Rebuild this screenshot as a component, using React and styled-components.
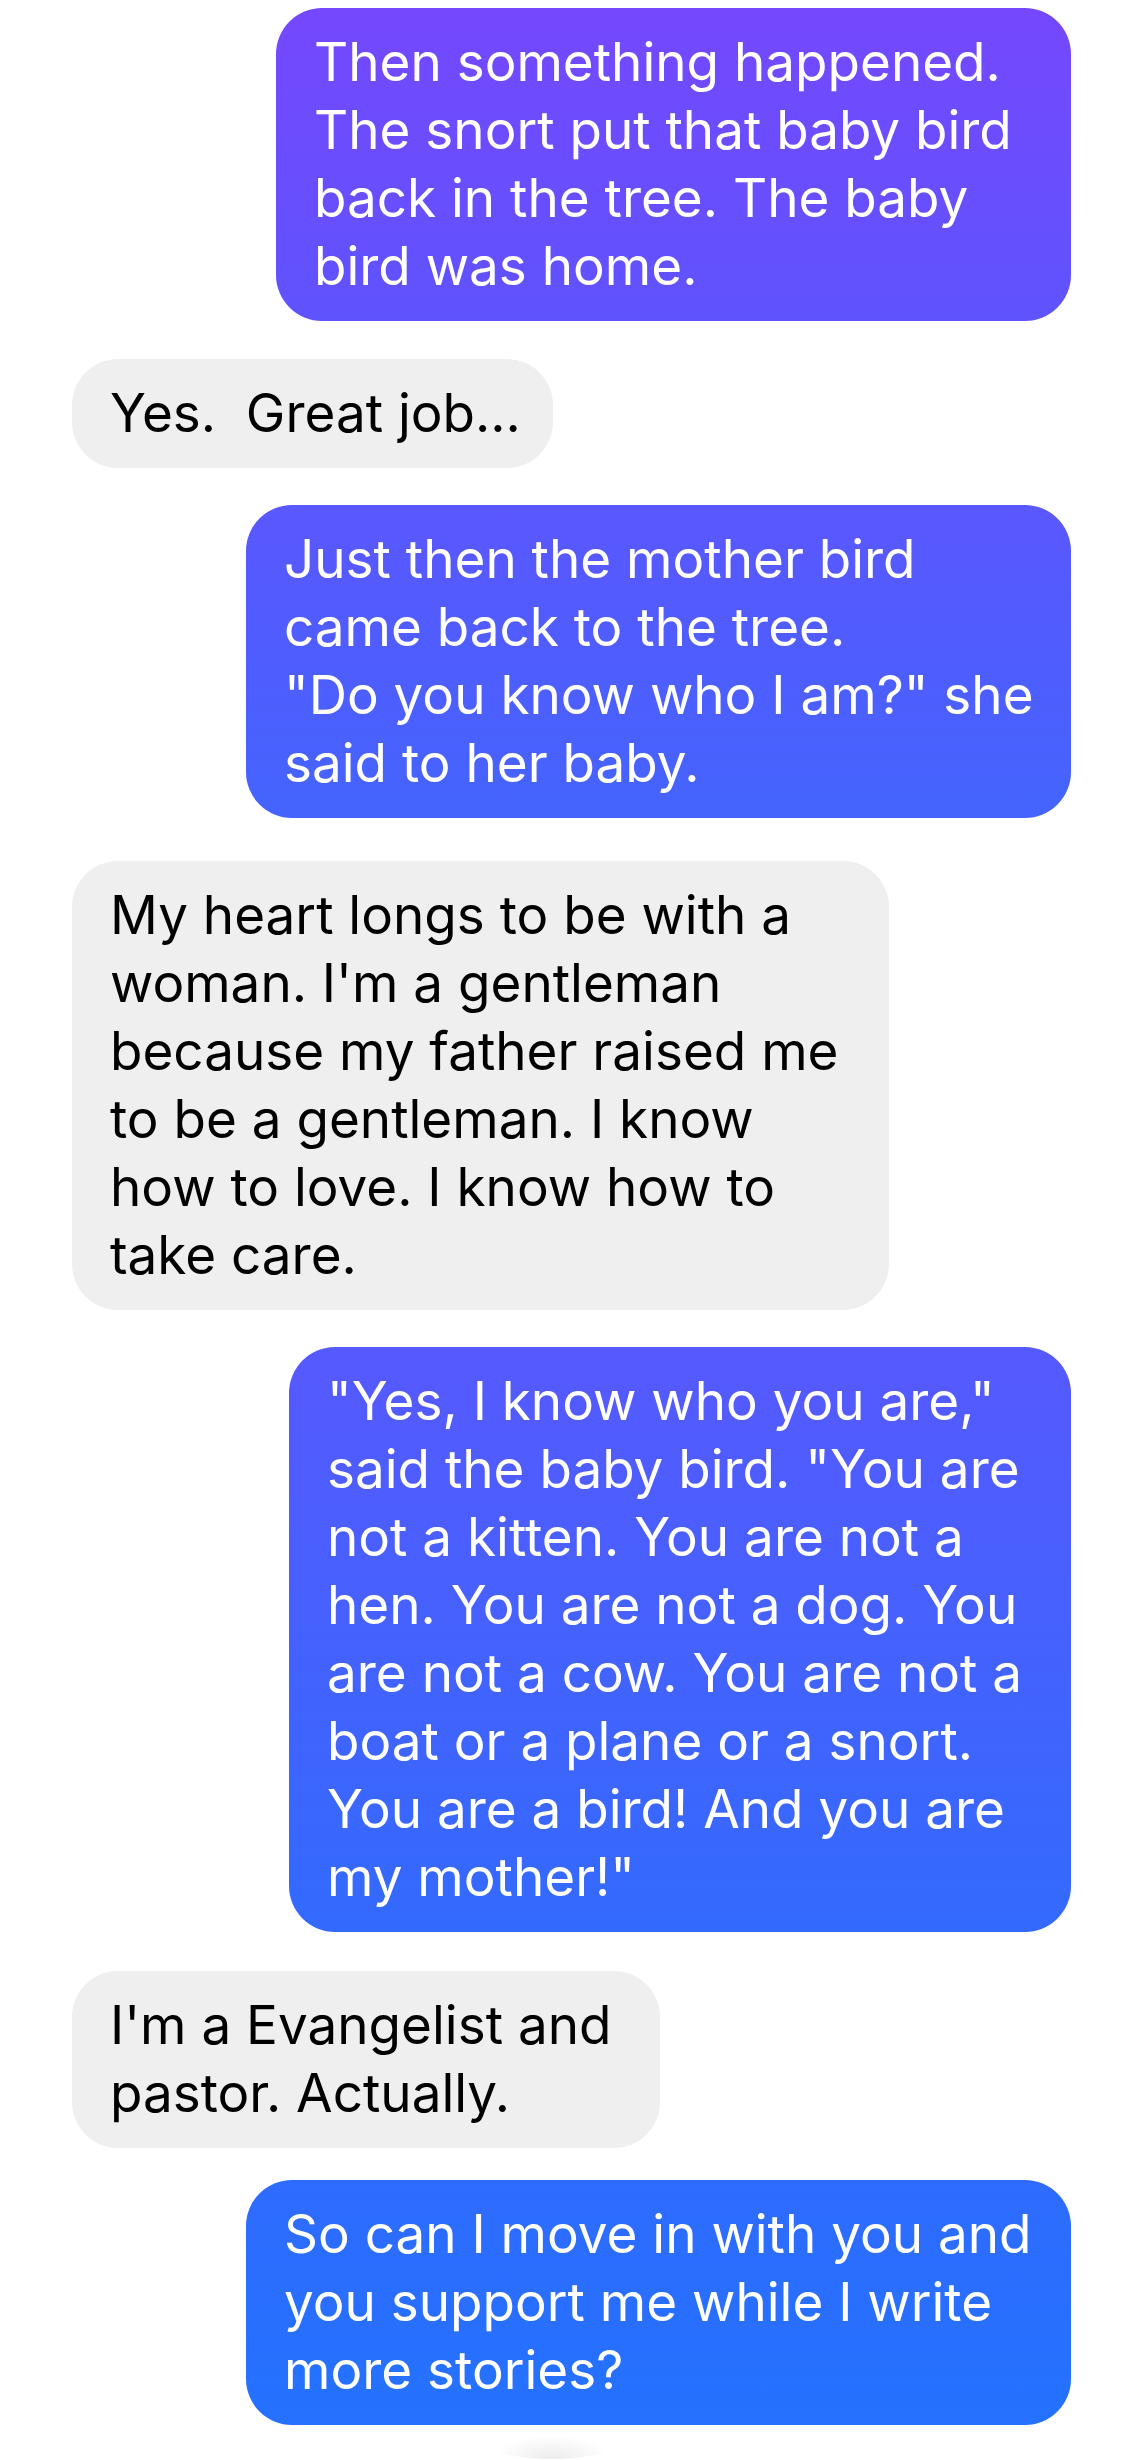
import React from "react";
import styled, { createGlobalStyle } from "styled-components";

const GlobalStyle = createGlobalStyle`
  html, body {
    margin: 0;
    padding: 0;
    background: #ffffff;
  }
  body {
    font-family: Inter, "Noto Sans", "Liberation Sans", sans-serif;
    -webkit-font-smoothing: antialiased;
  }
`;

const Thread = styled.div`
  display: flex;
  flex-direction: column;
  padding: 8px 66px 0 72px;
  min-height: 2460px;
  box-sizing: border-box;
`;

const Row = styled.div`
  display: flex;
  justify-content: ${(p) => (p.$sent ? "flex-end" : "flex-start")};
  margin-top: ${(p) => p.$space}px;
`;

const Bubble = styled.div`
  box-sizing: border-box;
  width: ${(p) => p.$w}px;
  padding: 20px 0 21px 38px;
  border-radius: 46px;
  font-size: 53px;
  line-height: 68px;
  letter-spacing: 0;
  color: ${(p) => (p.$sent ? "#ffffff" : "#000000")};
  background: ${(p) =>
    p.$sent ? `linear-gradient(180deg, ${p.$from} 0%, ${p.$to} 100%)` : "#efefef"};
`;

const Line = styled.span`
  display: block;
  white-space: pre;
`;

const Peek = styled.div`
  align-self: center;
  margin-top: 12px;
  margin-left: -40px;
  width: 110px;
  height: 22px;
  border-radius: 50%;
  background: radial-gradient(ellipse at 50% 100%, #ececec 0%, #f7f7f7 45%, #ffffff 75%);
`;

const messages = [
  {
    sent: true,
    w: 795,
    space: 0,
    from: "#7548fe",
    to: "#5f53fe",
    lines: [
      "Then something happened.",
      "The snort put that baby bird",
      "back in the tree. The baby",
      "bird was home.",
    ],
  },
  { sent: false, w: 481, space: 38, lines: ["Yes.  Great job..."] },
  {
    sent: true,
    w: 825,
    space: 37,
    from: "#5a57fe",
    to: "#4464fe",
    lines: [
      "Just then the mother bird",
      "came back to the tree.",
      "\"Do you know who I am?\" she",
      "said to her baby.",
    ],
  },
  {
    sent: false,
    w: 817,
    space: 43,
    lines: [
      "My heart longs to be with a",
      "woman. I'm a gentleman",
      "because my father raised me",
      "to be a gentleman. I know",
      "how to love. I know how to",
      "take care.",
    ],
  },
  {
    sent: true,
    w: 782,
    space: 37,
    from: "#5659fe",
    to: "#336afd",
    lines: [
      "\"Yes, I know who you are,\"",
      "said the baby bird. \"You are",
      "not a kitten. You are not a",
      "hen. You are not a dog. You",
      "are not a cow. You are not a",
      "boat or a plane or a snort.",
      "You are a bird! And you are",
      "my mother!\"",
    ],
  },
  {
    sent: false,
    w: 588,
    space: 39,
    lines: ["I'm a Evangelist and", "pastor. Actually."],
  },
  {
    sent: true,
    w: 825,
    space: 32,
    from: "#2e6bfe",
    to: "#2472ff",
    lines: [
      "So can I move in with you and",
      "you support me while I write",
      "more stories?",
    ],
  },
];

export default function App() {
  return (
    <>
      <GlobalStyle />
      <Thread>
        {messages.map((m, i) => (
          <Row key={i} $sent={m.sent} $space={m.space}>
            <Bubble $sent={m.sent} $w={m.w} $from={m.from} $to={m.to}>
              {m.lines.map((l, j) => (
                <Line key={j}>{l}</Line>
              ))}
            </Bubble>
          </Row>
        ))}
        <Peek />
      </Thread>
    </>
  );
}
